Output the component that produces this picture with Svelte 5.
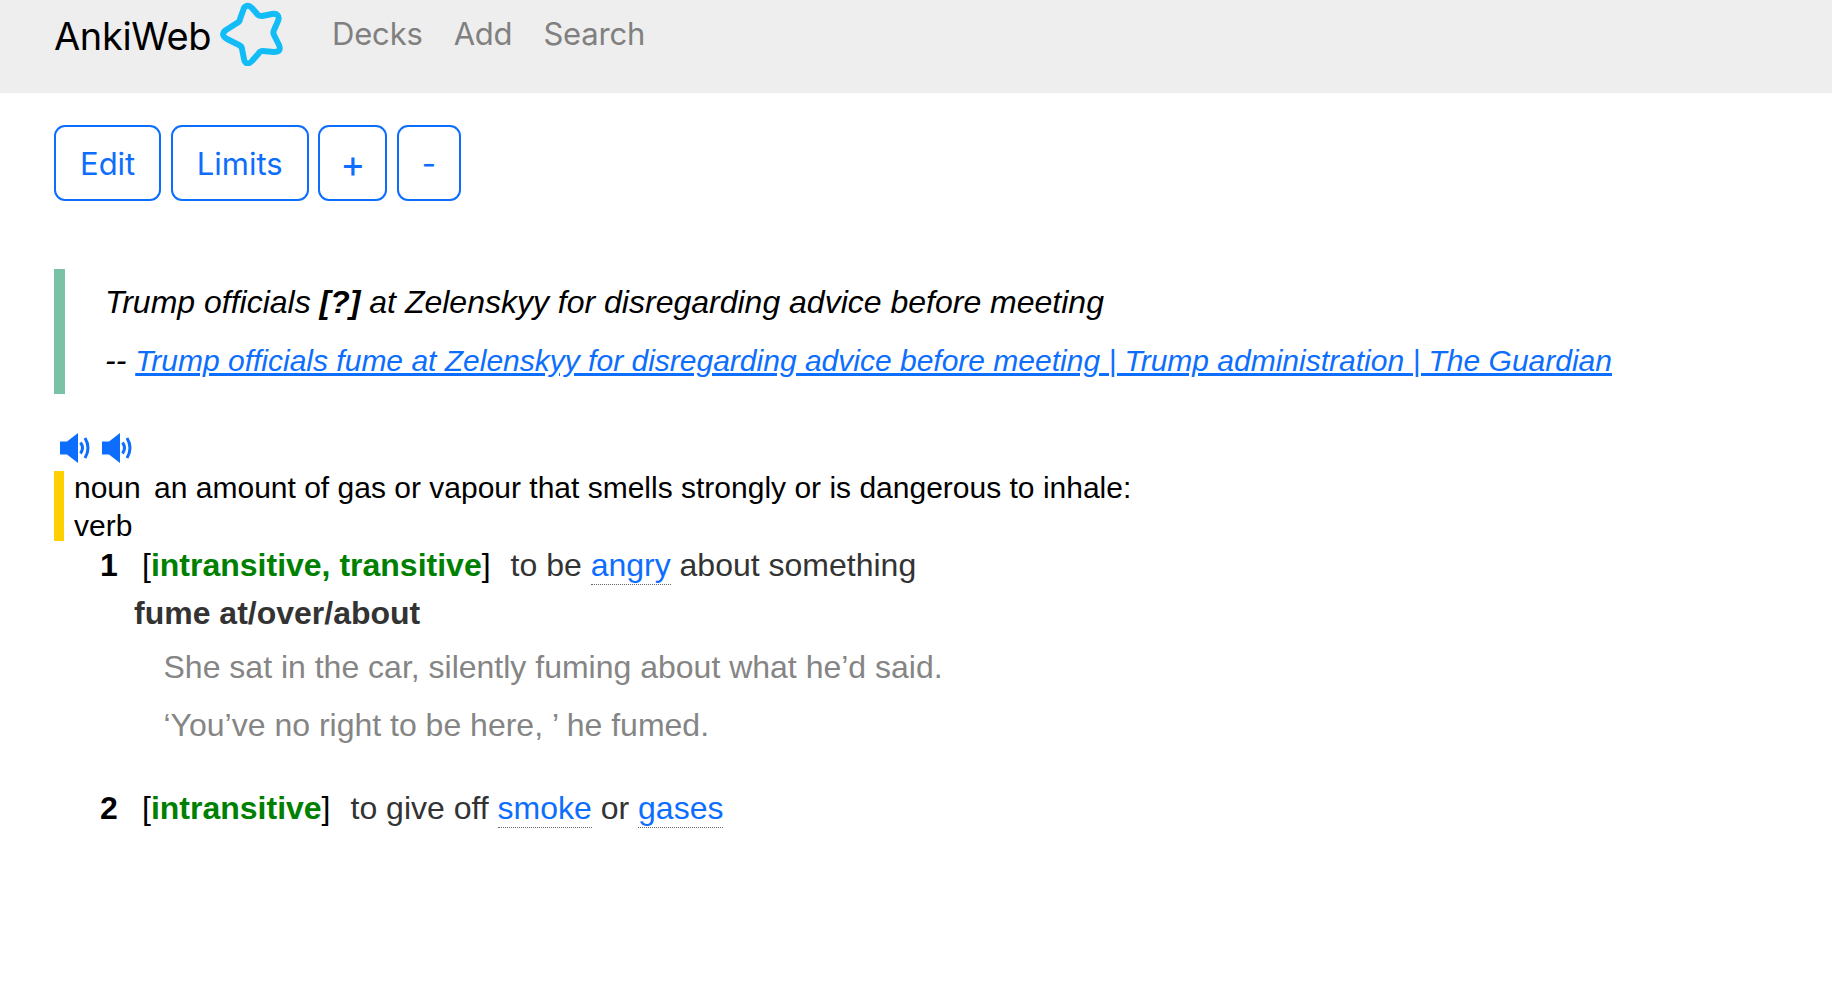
<script>
  const buttons = ['Edit', 'Limits', '+', '-'];
  const nav = ['Decks', 'Add', 'Search'];
</script>

<header class="bar">
  <span class="brand">AnkiWeb</span>
  <svg class="star" viewBox="0 0 64 64" width="64" height="64" aria-hidden="true">
    <path d="M25 6 C27 3 30 3 33 6 L39 13 C40 14 41 14 43 14 L53 12 C58 11 61 14 59 19 L55 28 C54 30 54 31 55 33 L60 43 C62 48 60 50 55 50 L44 49 C42 49 41 49 40 51 L33 59 C29 63 26 62 25 57 L23 47 C23 45 22 44 20 43 L8 37 C3 34 3 31 7 28 L18 21 C20 20 21 19 21 17 Z" fill="none" stroke="#12bdf7" stroke-width="6" stroke-linejoin="round"/>
  </svg>
  <nav class="nav">
    {#each nav as item}
      <span>{item}</span>
    {/each}
  </nav>
</header>

<main class="page">
  <div class="buttons">
    {#each buttons as b}
      <button type="button" class:plus={b === '+'} class:minus={b === '-'}>{b}</button>
    {/each}
  </div>

  <blockquote class="quote">
    <p class="q1">Trump officials <b>[?]</b> at Zelenskyy for disregarding advice before meeting</p>
    <p class="q2">-- <a href="#a">Trump officials fume at Zelenskyy for disregarding advice before meeting | Trump administration | The Guardian</a></p>
  </blockquote>

  <div class="audio">
    {#each [0, 1] as i (i)}
      <svg viewBox="0 0 30 30" width="30" height="30" aria-hidden="true">
        <path d="M0 8.5 H7 L18 0 V30 L7 21.5 H0 Z" fill="#0d6efd"/>
        <path d="M20.5 9.5 Q24.5 15 20.5 20.5" fill="none" stroke="#0d6efd" stroke-width="3"/>
        <path d="M25 5 Q31 15 25 25" fill="none" stroke="#0d6efd" stroke-width="3"/>
      </svg>
    {/each}
  </div>

  <div class="pos">
    <div class="lines">
      <div><span class="label">noun</span> an amount of gas or vapour that smells strongly or is dangerous to inhale:</div>
      <div>verb</div>
    </div>
  </div>

  <div class="sense s1">
    <b class="num">1</b>
    <span class="def">[<b class="gram">intransitive, transitive</b>]<span class="txt">to be <a class="ref" href="#b">angry</a> about something</span></span>
  </div>
  <div class="pattern">fume at/over/about</div>
  <div class="ex e1">She sat in the car, silently fuming about what he’d said.</div>
  <div class="ex e2">‘You’ve no right to be here, ’ he fumed.</div>
  <div class="sense s2">
    <b class="num">2</b>
    <span class="def">[<b class="gram">intransitive</b>]<span class="txt">to give off <a class="ref" href="#c">smoke</a> or <a class="ref" href="#d">gases</a></span></span>
  </div>
</main>

<style>
  :global(body) {
    margin: 0;
    background: #fff;
    font-family: "Liberation Sans", Arial, sans-serif;
    color: #000;
  }
  .bar {
    height: 93px;
    background: #eeeeee;
    display: flex;
    align-items: flex-start;
    padding-left: 54px;
    box-sizing: border-box;
  }
  .brand {
    font-family: Inter, sans-serif;
    font-size: 38px;
    line-height: 44px;
    margin-top: 14px;
    letter-spacing: -0.37px;
  }
  .star { margin: 2px 0 0 8px; }
  .nav {
    display: flex;
    gap: 31px;
    margin: 12px 0 0 49px;
    font-family: Inter, sans-serif;
    font-size: 31px;
    line-height: 44px;
    letter-spacing: -0.2px;
    color: #808080;
  }
  .page { padding: 32px 0 0 54px; }
  .buttons { display: flex; gap: 9.5px; }
  button {
    height: 76px;
    padding: 0 24px;
    border: 2px solid #0d6efd;
    border-radius: 11px;
    background: #fff;
    color: #0d6efd;
    font-family: Inter, sans-serif;
    font-size: 31px;
  }
  .plus { padding: 0 20px; font-size: 38px; }
  .minus { padding: 0 23px; }
  .quote {
    margin: 68px 0 0;
    height: 125px;
    box-sizing: border-box;
    border-left: 11px solid #79c2a6;
    padding-left: 40px;
    font-style: italic;
  }
  .quote p { margin: 0; line-height: 37px; }
  .q1 { padding-top: 15px; font-size: 32px; }
  .q2 { padding-top: 21px; font-size: 32px; }
  .q2 a { font-size: 30px; }
  a { color: #0d6efd; }
  .audio { display: flex; gap: 12px; margin: 39px 0 0 6px; height: 30px; }
  .pos {
    border-left: 10px solid #ffd000;
    padding-left: 10px;
    margin-top: 8px;
    height: 70px;
    font-size: 30px;
  }
  .lines { margin-top: -2.5px; line-height: 38.5px; display: inline-block; }
  .label { margin-right: 5px; }
  .sense { font-size: 32px; line-height: 40px; display: flex; }
  .num { width: 42px; margin-left: 46px; }
  .txt { margin-left: 20px; color: #333; }
  .s1 { margin-top: 4px; }
  .s2 { margin-top: 43px; }
  .gram { color: #008000; }
  .ref { text-decoration: none; border-bottom: 1px dotted #666; padding-bottom: 1px; }
  .pattern { font-size: 32px; font-weight: bold; color: #333; margin: 8px 0 0 80px; line-height: 40px; }
  .ex { font-size: 32px; color: #858585; margin-left: 109.5px; line-height: 40px; }
  .e1 { margin-top: 14px; }
  .e2 { margin-top: 18px; }
</style>
